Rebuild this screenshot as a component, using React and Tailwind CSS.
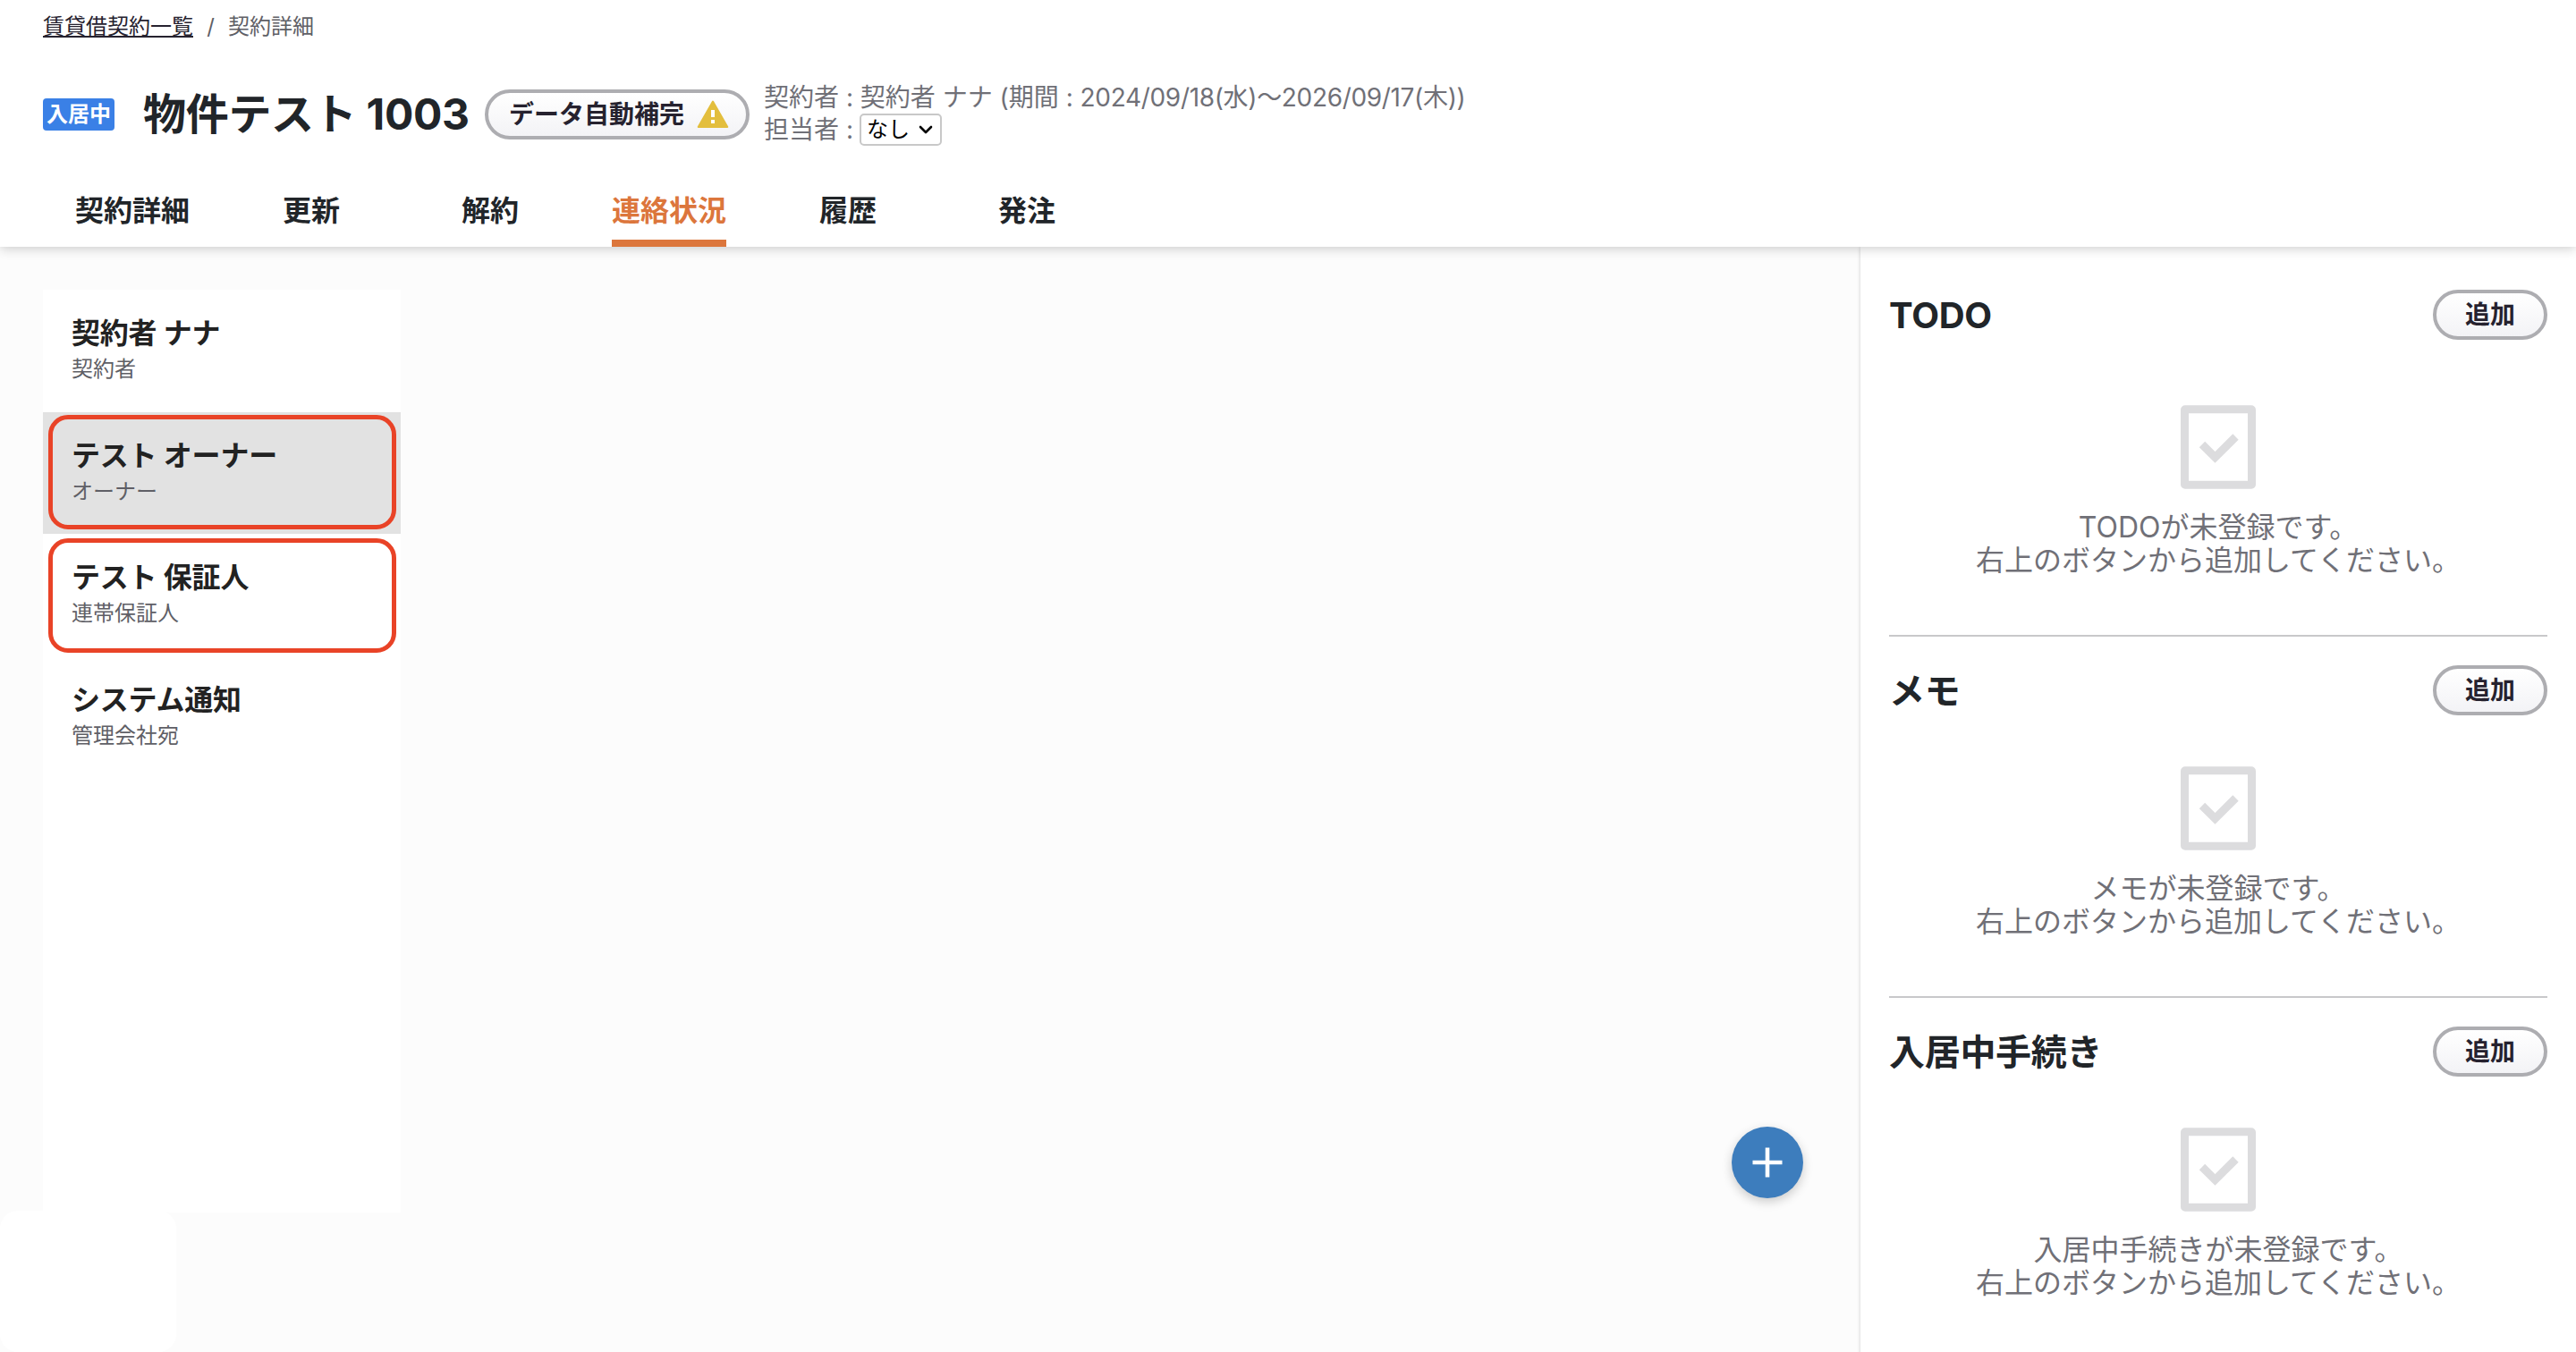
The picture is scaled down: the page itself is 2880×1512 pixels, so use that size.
import React, { useState } from 'react';

const TABS = ['契約詳細', '更新', '解約', '連絡状況', '履歴', '発注'];

const CONTACTS = [
  { name: '契約者 ナナ', role: '契約者' },
  { name: 'テスト オーナー', role: 'オーナー', mark: 'top-[3px]' },
  { name: 'テスト 保証人', role: '連帯保証人', mark: 'top-[5px]' },
  { name: 'システム通知', role: '管理会社宛' }
];

const SECTIONS = ['TODO', 'メモ', '入居中手続き'];

function PillButton({ className = '', children }) {
  return (
    <button
      className={`flex h-14 shrink-0 items-center justify-center rounded-full border-4 border-[#adadb1] bg-gradient-to-b from-white to-[#f3f3f6] text-[28px] leading-none font-bold text-[#26222f] ${className}`}
    >
      {children}
    </button>
  );
}

function WarningIcon() {
  return (
    <svg width="36" height="32" viewBox="0 0 36 32" className="shrink-0">
      <path d="M18 1.5 34.3 30H1.7Z" fill="#e3be3d" stroke="#e3be3d" strokeWidth="2" strokeLinejoin="round" />
      <path d="M16 11h4v8h-4zM16 22h4v4h-4z" fill="#fff" />
    </svg>
  );
}

function CheckBoxIcon() {
  return (
    <svg width="84" height="94" viewBox="0 0 84 94" fill="none" stroke="#dcdcde">
      <rect x="4.5" y="4.75" width="75" height="84.5" rx="0.5" strokeWidth="9" strokeLinejoin="round" />
      <path d="M24 44 38.5 58.5 61.5 35.5" strokeWidth="9" />
    </svg>
  );
}

function SideSection({ title, first }) {
  return (
    <section className={first ? 'pt-12' : 'border-t-2 border-[#c8c8ca] pt-8'}>
      <div className="flex h-14 items-center justify-between">
        <h2 className="pt-0.5 text-[40px] leading-none font-bold tracking-[-0.3px] text-[#212529]">{title}</h2>
        <PillButton className="w-32">追加</PillButton>
      </div>
      <div className={`flex flex-col items-center pb-[65px] ${first ? 'pt-[73px]' : 'pt-[57px]'}`}>
        <CheckBoxIcon />
        <p className="mt-6 text-center text-[32px] leading-[37px] text-[#707077]">
          {title}が未登録です。
          <br />
          右上のボタンから追加してください。
        </p>
      </div>
    </section>
  );
}

export default function App() {
  const [activeTab, setActiveTab] = useState('連絡状況');
  const [selected, setSelected] = useState('テスト オーナー');

  return (
    <div className="relative flex h-[1512px] w-[2880px] flex-col overflow-hidden bg-[#fcfcfc] font-['Inter','Noto_Sans_CJK_JP',sans-serif] text-[#212529]">
      <header className="relative z-10 flex h-[276px] shrink-0 flex-col bg-white px-12 shadow-[0_2px_12px_rgba(0,0,0,0.2)]">
        <nav className="flex h-[58px] items-center pt-px text-2xl leading-none text-[#5f5f66]">
          <a href="#" className="text-[#26222f] underline decoration-2 underline-offset-2 [text-decoration-skip-ink:none]">賃貸借契約一覧</a>
          <span className="w-[39px] text-center">/</span>
          <span>契約詳細</span>
        </nav>

        <div className="flex h-[138px] items-center">
          <span className="mt-0.5 flex h-9 w-20 items-center justify-center rounded bg-[#3a80e6] text-2xl leading-none font-bold text-white">
            入居中
          </span>
          <h1 className="ml-8 w-[366px] pt-0.5 text-[48px] leading-none font-bold tracking-[-0.3px] whitespace-nowrap">物件テスト 1003</h1>
          <PillButton className="mt-0.5 ml-4 w-[296px] gap-3.5 pl-1">
            データ自動補完
            <WarningIcon />
          </PillButton>
          <div className="ml-4 text-[28px] leading-9 whitespace-nowrap text-[#707077]">
            <p>
              契約者 : 契約者 ナナ (期間 : <span className="tracking-[-0.33px]">2024/09/18(水)〜2026/09/17(木))</span>
            </p>
            <div className="flex items-center">
              <span className="w-[107px]">担当者 :</span>
              <button className="flex h-9 w-[92px] items-center justify-between rounded-[5px] border-2 border-[#c8c8c8] bg-white pr-2 pl-1.5 text-2xl leading-none text-black">
                なし
                <svg width="16" height="10" viewBox="0 0 16 10" fill="none" stroke="#000" strokeWidth="2.6" strokeLinecap="round" strokeLinejoin="round">
                  <path d="M2 2 8 8 14 2" />
                </svg>
              </button>
            </div>
          </div>
        </div>

        <div className="flex h-20">
          {TABS.map((tab) => (
            <div key={tab} className="flex w-[200px] justify-center">
              <button
                onClick={() => setActiveTab(tab)}
                className={`h-20 border-b-8 pt-[7px] text-[32px] leading-none font-bold ${
                  tab === activeTab ? 'border-[#dc763c] text-[#dc763c]' : 'border-transparent'
                }`}
              >
                {tab}
              </button>
            </div>
          ))}
        </div>
      </header>

      <div className="flex flex-1">
        <main className="relative flex-1 px-12 pt-12">
          <ul className="h-[1032px] w-[400px] bg-white">
            {CONTACTS.map((c) => (
              <li key={c.name} className="relative h-[136.5px]">
                <button
                  onClick={() => setSelected(c.name)}
                  className={`flex h-full w-full flex-col px-8 pt-[29px] text-left ${c.name === selected ? 'bg-[#e2e2e2]' : ''}`}
                >
                  <span className="text-[32px] leading-10 font-bold tracking-[-0.2px] text-[#222]">{c.name}</span>
                  <span className="mt-0.5 text-2xl leading-9 text-[#5f5f66]">{c.role}</span>
                </button>
                {c.mark && (
                  <span className={`pointer-events-none absolute right-[5px] left-1.5 h-32 rounded-[22px] border-[5px] border-[#e94327] ${c.mark}`} />
                )}
              </li>
            ))}
          </ul>

          <button className="absolute right-16 bottom-[172px] flex size-20 -translate-y-1.5 items-center justify-center rounded-full bg-[#3d7dbd] shadow-[0_4px_12px_rgba(0,0,0,0.2)]">
            <svg width="34" height="34" viewBox="0 0 34 34" stroke="#fff" strokeWidth="4.6">
              <path d="M17 0.5V33.5M0.5 17H33.5" />
            </svg>
          </button>
        </main>

        <aside className="w-[800px] bg-white px-8 shadow-[0_0_4px_rgba(0,0,0,0.2)]">
          {SECTIONS.map((title, i) => (
            <SideSection key={title} title={title} first={i === 0} />
          ))}
        </aside>
      </div>

      <div className="absolute bottom-0 left-0 h-[158px] w-[197px] rounded-[20px] bg-white" />
    </div>
  );
}
